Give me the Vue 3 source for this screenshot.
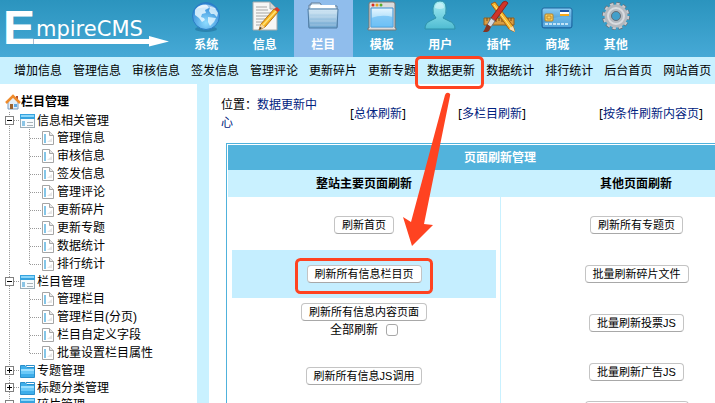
<template>
  <div class="page">
    <header class="topbar">
      <a class="logo" href="#" aria-label="EmpireCMS">
        <svg width="177" height="57" viewBox="0 0 177 57" fill="#fff">
          <text x="3" y="44" class="logo-initial">E</text>
          <text x="36" y="36" class="logo-name">mpireCMS</text>
          <path d="M34 39H149V36L169 41.500L149 46.500V44H34z" />
        </svg>
      </a>
      <nav class="modules">
        <a
          v-for="item in modules"
          :key="item.icon"
          href="#"
          class="module"
          :class="{ active: item.icon === activeModule }"
          @click.prevent="activeModule = item.icon"
        >
          <svg class="module-icon" viewBox="0 0 32 32">
            <g v-if="item.icon === 'globe'">
              <ellipse cx="16" cy="29" rx="11" ry="3" fill="#1c6794" opacity=".5" />
              <circle cx="16" cy="16" r="13.500" fill="url(#globe)" stroke="#2b7ec4" />
              <path d="M5 10C8 5 13 4 17 5L19 8L15 10L16 13L12 14L11 17L14 18L15 20L12 22L9 18L5 15z" fill="#e6f7ff" opacity=".85" />
              <path d="M20 7L25 8L28 13L27 17L24 14L21 14L19 11zM18 17L26 18L24 22L20 26L18 22z" fill="#e6f7ff" opacity=".8" />
              <path d="M6 9C10 3 21 3 26 9C19 7 12 7 6 9z" fill="#fff" opacity=".5" />
            </g>
            <g v-else-if="item.icon === 'note'">
              <path d="M4 2H21L28 9V30H4z" fill="#f7f7f5" stroke="#a2aaad" />
              <path d="M21 2V9H28z" fill="#d1d5d6" stroke="#a2aaad" />
              <path d="M7 7H18M7 10H19M7 13H22M7 16H19M7 19H17M7 22H14M7 25H12" stroke="#a5a5a5" />
              <path d="M10 30L12 24L25 9L29 12L16 27z" fill="#f7b520" stroke="#b97416" />
              <path d="M14 25L27 11" stroke="#ffe27b" stroke-width="1.500" />
              <path d="M25 9L28 7L31 10L29 12z" fill="#d93a2c" />
              <path d="M10 30L12 24L16 27z" fill="#f4d6a4" />
              <path d="M10 30L11 27L13 28z" fill="#333" />
            </g>
            <g v-else-if="item.icon === 'folder'">
              <path d="M2 8V5H4V3H13L15 6H30V27H2z" fill="#d2e5f3" stroke="#647d96" />
              <path d="M4 5H28V8H4z" fill="#fff" />
              <path d="M1 9H31L30 28H2z" fill="url(#folder)" stroke="#4f7da5" />
              <path d="M3 13H29M3 17H29M3 21H29M3 25H29" stroke="#fff" opacity=".25" />
            </g>
            <g v-else-if="item.icon === 'window'">
              <path d="M3 4Q3 2 5 2H27Q29 2 29 4V28H30V30H2V28H3z" fill="#dcdcdc" stroke="#777" />
              <path d="M5 8H27V27H5z" fill="url(#pane)" stroke="#3a8fcf" />
              <path d="M5 18Q16 14 27 17V27H5z" fill="#5db8f3" opacity=".6" />
              <circle cx="7" cy="5" r="1.500" fill="#d92c1f" />
              <circle cx="11" cy="5" r="1.500" fill="#e4a316" />
              <circle cx="15" cy="5" r="1.500" fill="#58ac29" />
            </g>
            <g v-else-if="item.icon === 'user'">
              <path d="M1 29Q1 23 6 21L12 18Q8 14 9 8Q10 1 16 1Q22 1 22 8Q23 14 19 18L25 21Q31 23 31 29z" fill="url(#user)" stroke="#2e91a9" />
              <path d="M11 8Q11 3 16 3Q20 3 20 8Q16 10 11 8z" fill="#fff" opacity=".4" />
            </g>
            <g v-else-if="item.icon === 'tools'">
              <path d="M1 18H31V25H1z" fill="#d99c42" stroke="#92601c" />
              <path d="M4 18V21M7 18V22M10 18V21M13 18V22M16 18V21M19 18V22M22 18V21M25 18V22M28 18V21" stroke="#754811" />
              <path d="M8 4L12 2L30 26L32 32L26 29z" fill="#f7b82d" stroke="#9d5c18" />
              <path d="M11 5L28 28" stroke="#ffe58b" />
              <path d="M26 29L30 26L32 32z" fill="#f7dfb5" />
              <path d="M20 2Q23 0 25 3L12 21L8 18z" fill="#cf342a" stroke="#8c231c" />
              <path d="M8 18L12 21L8 27L4 25z" fill="#d8dbe0" stroke="#777" />
              <path d="M4 24L8 27L6 31Q3 33 0 32Q2 29 4 24z" fill="#853522" />
            </g>
            <g v-else-if="item.icon === 'card'">
              <rect x="1" y="8" width="30" height="20" rx="2" fill="url(#card)" stroke="#1f659d" />
              <path d="M2 23Q14 15 30 17V27H2z" fill="#79c5f2" opacity=".5" />
              <rect x="4" y="14" width="8" height="7" rx="1" fill="#f8d063" stroke="#b58224" />
              <path d="M6 16H10V19H6z" fill="none" stroke="#c58b28" />
              <path d="M19 10H28V12H19z" fill="#1d52a2" />
              <path d="M19 12H28V14H19z" fill="#fff" />
              <path d="M19 14H28V16H19z" fill="#f5a91c" />
              <path d="M4 24H28" stroke="#e5f7ff" stroke-width="1.500" stroke-dasharray="3 1" />
            </g>
            <g v-else>
              <circle cx="16" cy="16" r="12" fill="none" stroke="#687078" stroke-width="4" stroke-dasharray="3.800 2.480" />
              <circle cx="16" cy="16" r="12" fill="none" stroke="#c8cbd0" stroke-width="2.500" stroke-dasharray="3.300 2.980" />
              <circle cx="16" cy="16" r="8" fill="none" stroke="#b4b9bf" stroke-width="7" />
              <circle cx="16" cy="16" r="8" fill="none" stroke="#d9dce0" stroke-width="2" />
              <circle cx="16" cy="16" r="4.500" fill="#439fca" stroke="#686e76" />
            </g>
          </svg>
          <span>{{ item.label }}</span>
        </a>
      </nav>
    </header>

    <nav class="subnav">
      <a v-for="link in shortcuts" :key="link" href="#">{{ link }}</a>
    </nav>

    <div class="body">
      <aside class="sidebar">
        <div class="tree-title">
          <svg width="16" height="16" viewBox="0 0 16 16">
            <path d="M3 8L8 3L13 8V15H3z" fill="#e5eef8" stroke="#7b9cc0" />
            <path d="M11 2H13V6L11 4z" fill="#b55232" />
            <path d="M1 9L8 2L15 9" fill="none" stroke="#ef8b2c" stroke-width="2.500" />
            <path d="M5 10H8V15H5z" fill="#9a6231" />
            <path d="M9 10H12V13H9z" fill="#5fa8e3" />
          </svg>
          <strong>栏目管理</strong>
        </div>
        <ul class="tree">
          <li v-for="branch in tree" :key="branch.label">
            <button type="button" class="branch" @click="branch.open = !branch.open">
              <span class="toggle" :class="{ closed: !branch.open }"></span>
              <span class="dash short"></span>
              <svg v-if="branch.open" width="15" height="14" viewBox="0 0 15 14">
                <rect x=".5" y=".5" width="14" height="13" fill="#f7fbfd" stroke="#9aabb5" />
                <path d="M0 0H15V5H0z" fill="#36a3df" />
                <path d="M1 1H14V3H1z" fill="#8cd7fa" />
                <path d="M2 7H5V12H2z" fill="#8bc5e6" />
                <path d="M7 8.500H13M7 11.500H13" stroke="#aab4ba" />
              </svg>
              <svg v-else width="15" height="14" viewBox="0 0 15 14">
                <path d="M.5 13.500V1.500H5L7 3.500H14.500V13.500z" fill="#3eaeea" stroke="#2b8fcb" />
                <path d="M1 5H14V7H1z" fill="#9de0ff" />
                <path d="M1 7H14V10H1z" fill="#6bc9f8" />
                <path d="M6 1.500H14.500V4" fill="none" stroke="#2b8fcb" />
              </svg>
              <span class="branch-label">{{ branch.label }}</span>
            </button>
            <ul v-if="branch.open" class="leaves">
              <li v-for="leaf in branch.children" :key="leaf">
                <span class="dash"></span>
                <svg width="12" height="14" viewBox="0 0 12 14">
                  <path d="M.5 .5H7.500L11.500 4.500V13.500H.5z" fill="#fff" stroke="#a5a5a5" />
                  <path d="M7.500 .5V4.500H11.500" fill="#e8e8e8" stroke="#a5a5a5" />
                  <path d="M2 3H4V12H2z" fill="#84c6e8" />
                  <path d="M5 11H10V7z" fill="#e6e6e6" />
                </svg>
                <a href="#">{{ leaf }}</a>
              </li>
            </ul>
          </li>
        </ul>
      </aside>

      <main class="content">
        <div class="toolbar">
          <p>位置：<a href="#">数据更新中心</a></p>
          <span v-for="link in refreshLinks" :key="link">[<a href="#">{{ link }}</a>]</span>
        </div>

        <table class="panel">
          <thead>
            <tr class="panel-title">
              <th colspan="2">页面刷新管理</th>
            </tr>
            <tr class="panel-heads">
              <th>整站主要页面刷新</th>
              <th>其他页面刷新</th>
            </tr>
          </thead>
          <tbody>
            <tr>
              <td v-for="(column, i) in columns" :key="i">
                <div
                  v-for="job in column"
                  :key="job.label"
                  class="job"
                  :class="{ highlight: job.label === hovered, tall: job.tall }"
                >
                  <button type="button" @mouseenter="hovered = job.label">{{ job.label }}</button>
                  <label v-if="job.checkbox">{{ job.checkbox }} <input v-model="refreshAll" type="checkbox" /></label>
                </div>
              </td>
            </tr>
          </tbody>
        </table>
      </main>
    </div>

    <!-- Step hints drawn over the page -->
    <svg class="hints" width="715" height="403" viewBox="0 0 715 403">
      <g fill="none" stroke="#ff4321" stroke-width="3">
        <rect x="416.500" y="57.500" width="66" height="30" rx="4" />
        <rect x="296.500" y="259.500" width="135" height="33" rx="4" />
      </g>
      <path d="M445 95Q446 92 449 93Q451 94 450 96L424 224L433 225L412 246L403 217L411 222z" fill="#ff4321" />
    </svg>

    <svg class="defs" width="0" height="0">
      <defs>
        <radialGradient id="globe" cx=".5" cy=".75" r=".7">
          <stop offset="0" stop-color="#8edcff" />
          <stop offset="1" stop-color="#2c83d3" />
        </radialGradient>
        <linearGradient id="folder" x2="0" y2="1">
          <stop offset="0" stop-color="#d4e8f5" />
          <stop offset="1" stop-color="#6ba4cf" />
        </linearGradient>
        <linearGradient id="pane" x2="0" y2="1">
          <stop offset="0" stop-color="#e6f6ff" />
          <stop offset="1" stop-color="#83ccf8" />
        </linearGradient>
        <linearGradient id="user" x2="0" y2="1">
          <stop offset="0" stop-color="#a4edf4" />
          <stop offset="1" stop-color="#4fbcd2" />
        </linearGradient>
        <linearGradient id="card" x2="0" y2="1">
          <stop offset="0" stop-color="#8bcdf4" />
          <stop offset="1" stop-color="#277fc0" />
        </linearGradient>
      </defs>
    </svg>
  </div>
</template>

<script setup>
import { ref } from 'vue';

const activeModule = ref('folder');
const hovered = ref('刷新所有信息栏目页');
const refreshAll = ref(false);

const modules = [
  { icon: 'globe', label: '系统' },
  { icon: 'note', label: '信息' },
  { icon: 'folder', label: '栏目' },
  { icon: 'window', label: '模板' },
  { icon: 'user', label: '用户' },
  { icon: 'tools', label: '插件' },
  { icon: 'card', label: '商城' },
  { icon: 'gear', label: '其他' }
];

const shortcuts = [
  '增加信息', '管理信息', '审核信息', '签发信息', '管理评论', '更新碎片',
  '更新专题', '数据更新', '数据统计', '排行统计', '后台首页', '网站首页'
];

const tree = ref([
  {
    label: '信息相关管理',
    open: true,
    children: ['管理信息', '审核信息', '签发信息', '管理评论', '更新碎片', '更新专题', '数据统计', '排行统计']
  },
  {
    label: '栏目管理',
    open: true,
    children: ['管理栏目', '管理栏目(分页)', '栏目自定义字段', '批量设置栏目属性']
  },
  { label: '专题管理', open: false, children: [] },
  { label: '标题分类管理', open: false, children: [] },
  { label: '碎片管理', open: true, children: [] }
]);

const refreshLinks = ['总体刷新', '多栏目刷新', '按条件刷新内容页'];

const columns = [
  [
    { label: '刷新首页' },
    { label: '刷新所有信息栏目页' },
    { label: '刷新所有信息内容页面', checkbox: '全部刷新', tall: true },
    { label: '刷新所有信息JS调用' }
  ],
  [
    { label: '刷新所有专题页' },
    { label: '批量刷新碎片文件' },
    { label: '批量刷新投票JS' },
    { label: '批量刷新广告JS' },
    { label: '批量刷新自定义页', tall: true }
  ]
];
</script>

<style>
body {
  margin: 0;
  background: #fff;
}
</style>

<style scoped>
.page {
  position: relative;
  display: flex;
  flex-direction: column;
  height: 100vh;
  overflow: hidden;
  font-family: "Liberation Sans", "Noto Sans CJK SC", sans-serif;
  font-size: 12px;
  line-height: 18px;
  color: #000;
}

a {
  color: inherit;
  text-decoration: none;
}

ul {
  list-style: none;
  margin: 0;
  padding: 0;
}

svg {
  display: block;
  flex: none;
}

.topbar {
  display: flex;
  flex: none;
  height: 57px;
  background: linear-gradient(#2b94be, #46a9d6);
}

.logo {
  flex: none;
}

.logo-initial {
  font-family: "Liberation Sans", sans-serif;
  font-size: 48px;
  font-weight: bold;
}

.logo-name {
  font-family: "DejaVu Sans", sans-serif;
  font-size: 21px;
}

.modules {
  display: grid;
  grid-template-columns: repeat(8, 1fr);
  flex: none;
  width: 468px;
}

.module {
  display: flex;
  flex-direction: column;
  align-items: center;
  gap: 4px;
  color: #fff;
  font-weight: bold;
}

.module.active {
  background: #90bdec;
}

.module-icon {
  width: 32px;
  height: 32px;
}

.subnav {
  display: flex;
  flex: none;
  align-items: center;
  gap: 11px;
  height: 27px;
  padding: 0 14px;
  background: #c9f1ff;
  white-space: nowrap;
}

.body {
  display: flex;
  flex: 1;
  min-height: 0;
}

.sidebar {
  flex: none;
  width: 197px;
  padding-top: 8px;
  border-right: 12px solid #c9f1ff;
  overflow: hidden;
}

.tree-title {
  display: flex;
  align-items: center;
  height: 20px;
  padding-left: 5px;
}

.tree {
  background: repeating-linear-gradient(#999 0 1px, transparent 1px 2px) 9px 0 / 1px 100% no-repeat;
}

.branch {
  display: flex;
  align-items: center;
  height: 17px;
  padding: 0 0 0 5px;
  border: 0;
  background: none;
  font: inherit;
  color: inherit;
}

.branch-label {
  padding-left: 2px;
}

.toggle {
  box-sizing: border-box;
  width: 9px;
  height: 9px;
  border: 1px solid #808080;
  background: linear-gradient(#000, #000) center / 5px 1px no-repeat #fff;
}

.toggle.closed {
  background:
    linear-gradient(#000, #000) center / 5px 1px no-repeat,
    linear-gradient(#000, #000) center / 1px 5px no-repeat,
    #fff;
}

.dash {
  width: 12px;
  height: 1px;
  background: repeating-linear-gradient(90deg, #999 0 1px, transparent 1px 2px);
}

.dash.short {
  width: 6px;
}

.leaves {
  background: repeating-linear-gradient(#999 0 1px, transparent 1px 2px) 29px 0 / 1px calc(100% - 9px) no-repeat;
}

.leaves li {
  display: flex;
  align-items: center;
  height: 18px;
  padding-left: 30px;
}

.leaves a {
  padding-left: 3px;
}

.content {
  flex: 1;
  min-width: 0;
  padding: 12px;
  overflow: hidden;
}

.toolbar {
  display: grid;
  grid-template-columns: 100px 114px 114px 204px;
  align-items: center;
  margin-bottom: 11px;
  font-family: "Noto Sans", "Noto Sans CJK SC", sans-serif;
  text-align: center;
}

.toolbar p {
  margin: 0;
  text-align: left;
}

.toolbar a {
  color: #002280;
}

.panel {
  width: 100%;
  min-width: 548px;
  margin-left: 5px;
  padding: 1px;
  border: 1px solid #50b2dc;
  border-spacing: 0;
  table-layout: fixed;
}

.panel th {
  padding: 0;
}

.panel-title th {
  height: 25px;
  background: #52b3dc;
  color: #fff;
}

.panel-heads th {
  height: 27px;
  background: #c9f1ff;
}

.panel td {
  padding: 4px;
  vertical-align: top;
}

.panel td + td {
  border-left: 1px solid #c9f1ff;
}

.job {
  display: flex;
  flex-direction: column;
  align-items: center;
  justify-content: center;
  box-sizing: border-box;
  height: 48px;
  margin-bottom: 1px;
}

.job.tall {
  justify-content: flex-start;
  height: 52px;
  padding-top: 4px;
}

.job.highlight {
  background: #c5eeff;
}

.job button {
  box-sizing: border-box;
  height: 18px;
  padding: 0 7px;
  border: 1px solid #c4c4c4;
  border-bottom-color: #a8a8a8;
  border-radius: 4px;
  background: #fff;
  font-family: inherit;
  font-size: 11px;
  line-height: 16px;
  color: #000;
}

.job label {
  display: flex;
  align-items: center;
  gap: 8px;
}

.job input {
  appearance: none;
  box-sizing: border-box;
  width: 12px;
  height: 12px;
  margin: 0;
  border: 1px solid #a8a8a8;
  border-radius: 3px;
  background: #fff;
}

.job input:checked {
  background: #2f86e0;
}

.hints {
  position: absolute;
  top: 0;
  left: 0;
  pointer-events: none;
}

.defs {
  position: absolute;
}
</style>
